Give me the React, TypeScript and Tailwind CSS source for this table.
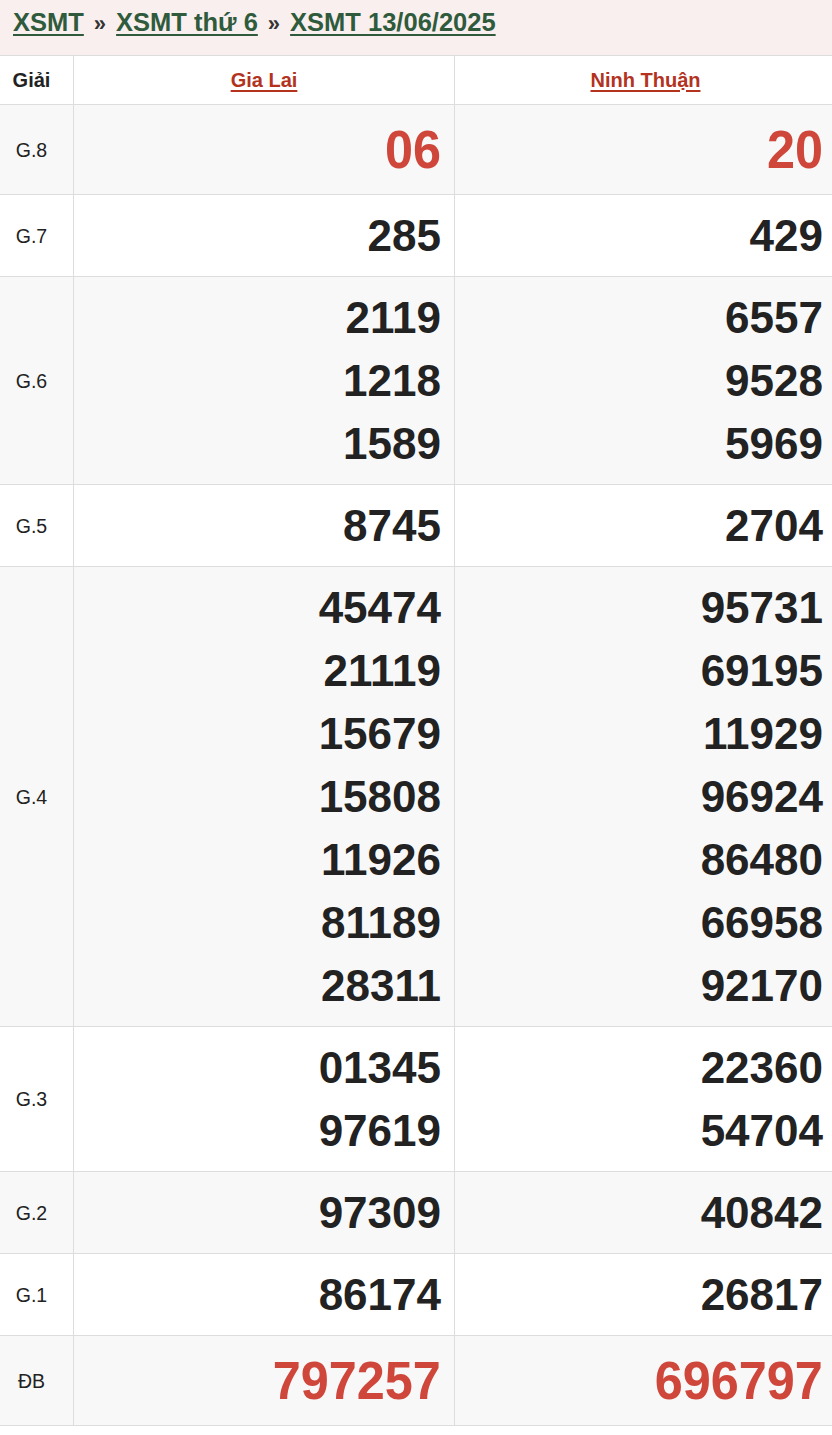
import React from "react";

type Row = { label: string; a: string[]; b: string[]; big?: boolean; alt: boolean };

const rows: Row[] = [
  { label: "G.8", a: ["06"], b: ["20"], big: true, alt: true },
  { label: "G.7", a: ["285"], b: ["429"], alt: false },
  { label: "G.6", a: ["2119", "1218", "1589"], b: ["6557", "9528", "5969"], alt: true },
  { label: "G.5", a: ["8745"], b: ["2704"], alt: false },
  {
    label: "G.4",
    a: ["45474", "21119", "15679", "15808", "11926", "81189", "28311"],
    b: ["95731", "69195", "11929", "96924", "86480", "66958", "92170"],
    alt: true,
  },
  { label: "G.3", a: ["01345", "97619"], b: ["22360", "54704"], alt: false },
  { label: "G.2", a: ["97309"], b: ["40842"], alt: true },
  { label: "G.1", a: ["86174"], b: ["26817"], alt: false },
  { label: "ĐB", a: ["797257"], b: ["696797"], big: true, alt: true },
];

function Nums({ vals, big }: { vals: string[]; big?: boolean }) {
  return (
    <div className="flex flex-col items-end py-[9px]">
      {vals.map((v, i) =>
        big ? (
          <span
            key={i}
            className="block origin-right scale-x-[0.95] text-[53px] font-bold leading-[71px] text-[#cf463b]"
          >
            {v}
          </span>
        ) : (
          <span key={i} className="block text-[44px] font-bold leading-[63px] text-[#222222]">
            {v}
          </span>
        )
      )}
    </div>
  );
}

export default function App() {
  return (
    <div
      className="min-h-[1435px] w-[832px] overflow-hidden bg-white"
      style={{ fontFamily: '"Liberation Sans", Arial, sans-serif' }}
    >
      <div className="h-[55px] bg-[#f9efef] pl-[13px] pt-[7px] text-[25.5px] font-bold leading-[30px] text-[#333333]">
        <a className="text-[#2f5b3c] underline decoration-2 underline-offset-[3px]">XSMT</a>
        <span className="mx-[10px] text-[22px]">»</span>
        <a className="text-[#2f5b3c] underline decoration-2 underline-offset-[3px]">XSMT thứ 6</a>
        <span className="mx-[10px] text-[22px]">»</span>
        <a className="text-[#2f5b3c] underline decoration-2 underline-offset-[3px]">XSMT 13/06/2025</a>
      </div>
      <div className="w-[836px] border-t border-[#dddddd]">
        <div className="grid h-[49px] grid-cols-[74px_381px_381px] border-b border-[#dddddd] bg-white">
          <div className="flex items-center justify-center border-r border-[#dddddd] pr-[10px] text-[20px] font-bold text-[#222222]">
            Giải
          </div>
          <div className="flex items-center justify-center border-r border-[#dddddd] text-[20px] font-bold">
            <a className="text-[#b3331f] underline underline-offset-[3px]">Gia Lai</a>
          </div>
          <div className="flex items-center justify-center text-[20px] font-bold">
            <a className="text-[#b3331f] underline underline-offset-[3px]">Ninh Thuận</a>
          </div>
        </div>
        {rows.map((r) => (
          <div
            key={r.label}
            className={`grid grid-cols-[74px_381px_381px] border-b border-[#dddddd] ${
              r.alt ? "bg-[#f8f8f8]" : "bg-white"
            }`}
          >
            <div className="flex items-center justify-center border-r border-[#dddddd] pr-[10px] pt-[2px] text-[19.5px] text-[#222222]">
              {r.label}
            </div>
            <div className="border-r border-[#dddddd] pr-[13px]">
              <Nums vals={r.a} big={r.big} />
            </div>
            <div className="pr-[13px]">
              <Nums vals={r.b} big={r.big} />
            </div>
          </div>
        ))}
      </div>
    </div>
  );
}
